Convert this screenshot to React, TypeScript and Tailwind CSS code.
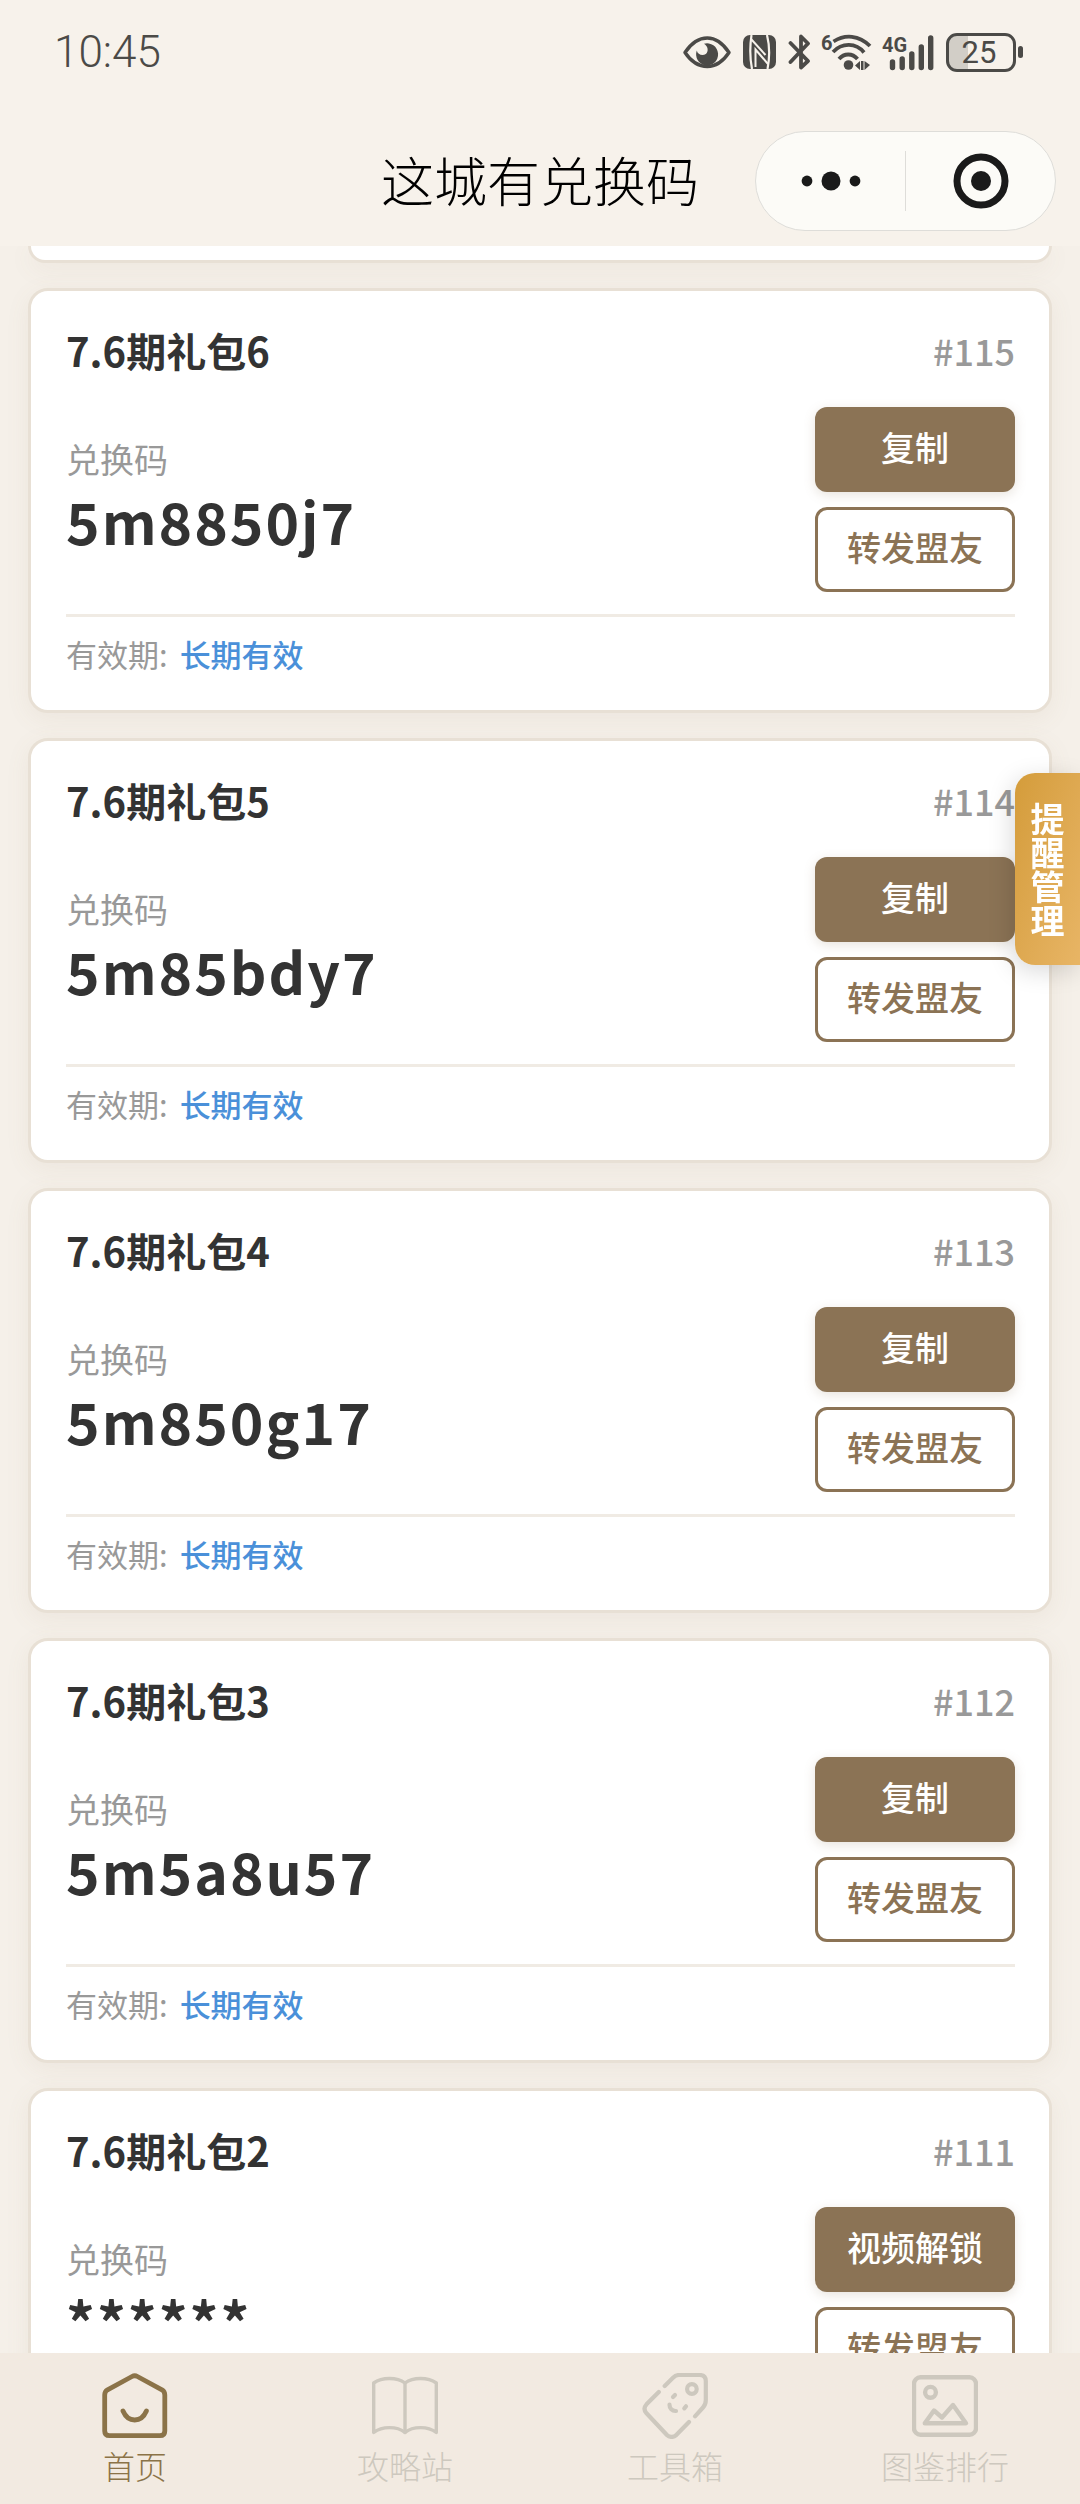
import clsx from "clsx";

type Gift = {
  id: number;
  name: string;
  code: string;
  locked?: boolean;
};

const gifts: Gift[] = [
  { id: 115, name: "7.6期礼包6", code: "5m8850j7" },
  { id: 114, name: "7.6期礼包5", code: "5m85bdy7" },
  { id: 113, name: "7.6期礼包4", code: "5m850g17" },
  { id: 112, name: "7.6期礼包3", code: "5m5a8u57" },
  { id: 111, name: "7.6期礼包2", code: "******", locked: true },
];

const StatusBar = () => {
  return <div className="flex h-[104px] items-center justify-between pl-[54px] pr-[57px] text-[#4b4a47]">
      <span className="font-['Roboto',sans-serif] text-[44px] font-light leading-none">10:45</span>

      <div className="flex items-center">
        {/* Eye comfort */}
        <svg className="mr-3 h-[34px] w-12" viewBox="0 0 48 34" fill="none">
          <path d="M2 17.5C9 7 17 3 24.3 3S39 7 46 17.5C39 28 31.5 31.5 24.3 31.5S9 28 2 17.5Z" stroke="currentColor" strokeWidth="3.400" strokeLinejoin="round" />
          <path d="M21 8.800A11 11 0 1 1 13.800 15.500C14.500 19.500 19.500 21.500 22.800 19C26 16.500 25 11 21 8.800Z" fill="currentColor" />
        </svg>

        {/* NFC */}
        <svg className="mr-3 h-[34px] w-[33px]" viewBox="0 0 33 34" fill="none">
          <rect width="33" height="34" rx="7" fill="currentColor" />
          <path d="M8.500 0C7 10 7 24 9 34M24 0C26.500 10 26.500 24 24.500 34" stroke="#f7f2eb" strokeWidth="2.200" />
          <path d="M8 4L22.500 20M12.500 32V14.500L25 29" stroke="#f7f2eb" strokeWidth="2" />
        </svg>

        {/* Bluetooth */}
        <svg className="mr-2.5 h-9 w-[23px]" viewBox="0 0 23 36" fill="none" stroke="currentColor" strokeWidth="3.800" strokeLinecap="round" strokeLinejoin="round">
          <path d="M2.500 9L20 27L13 33.500V2.500L20 9.500L2.500 28" />
        </svg>

        {/* Wi-Fi 6 */}
        <svg className="mr-2.5 h-[38px] w-[51px] overflow-visible" viewBox="0 0 51 38" fill="none">
          <text x="0" y="17" fill="currentColor" className="font-['Roboto',sans-serif] text-[20px] font-bold">6</text>
          <g stroke="currentColor" strokeWidth="3.800">
            <path d="M12.500 8.500C24 1 38 2 49 13" />
            <path d="M12 19C21 9.500 35 9.500 43 19.500" />
            <path d="M18 26C23 20 31.500 20 36.500 26" />
          </g>
          <circle cx="27.500" cy="32" r="4.800" fill="currentColor" />
          <path d="M34 32.500L39 28V37ZM40 28H42.500V37H40ZM43.500 28L49 32L43.500 37Z" fill="currentColor" />
        </svg>

        {/* Mobile signal */}
        <svg className="mr-3 h-[37px] w-[52px] overflow-visible" viewBox="0 0 52 37" fill="none">
          <text x="0" y="18" fill="currentColor" className="font-['Roboto',sans-serif] text-[20px] font-bold">4G</text>
          <path d="M10.500 28V33.500M20.200 25V33.500M29.800 20V33.500M39.300 13V33.500M48.700 4V33.500" stroke="currentColor" strokeWidth="5.400" strokeLinecap="round" />
        </svg>

        {/* Battery */}
        <div className="flex h-[39px] w-[70px] items-center justify-center rounded-[11px] border-[3px] border-current bg-linear-to-r from-[#d2cec7] from-30% to-transparent to-30% pr-1">
          <span className="font-['Roboto',sans-serif] text-[31px] leading-none">25</span>
        </div>
        <div className="ml-0.5 h-3 w-[5px] rounded-sm bg-current"></div>
      </div>
    </div>;
};

const TitleBar = () => {
  return <div className="grid h-[142px] grid-cols-[1fr_auto_1fr] items-center pt-3 pr-6">
      <h1 className="col-start-2 pb-1 pl-6 text-[53px] font-light leading-none text-black">这城有兑换码</h1>

      <div className="flex h-[100px] w-[301px] items-center justify-self-end rounded-full border border-[#deddd9] bg-[#fcfbf7] text-[#1a1a1a]">
        <button type="button" aria-label="更多" className="flex flex-1 justify-center">
          <svg className="h-5 w-[60px]" viewBox="0 0 60 20" fill="currentColor">
            <circle cx="6" cy="10" r="5.400" />
            <circle cx="30" cy="10" r="9.500" />
            <circle cx="54" cy="10" r="5.400" />
          </svg>
        </button>
        <span className="h-[60px] w-px bg-[#deddd9]"></span>
        <button type="button" aria-label="关闭" className="flex flex-1 justify-center">
          <svg className="size-14" viewBox="0 0 56 56" fill="none">
            <circle cx="28" cy="28" r="24" stroke="currentColor" strokeWidth="7" />
            <circle cx="28" cy="28" r="10" fill="currentColor" />
          </svg>
        </button>
      </div>
    </div>;
};

const GiftCard = ({ gift }: { gift: Gift }) => {
  return <article className="shrink-0 rounded-[20px] border-[3px] border-[#e8e0d5] bg-white py-[35px] pr-[34px] pl-[35px] shadow-[0_6px_24px_rgba(139,115,85,0.08)]">
      <div className="mb-8 flex h-12 items-center justify-between">
        <h2 className="text-[40px] font-bold leading-none text-[#333]">{gift.name}</h2>
        <span className="text-[36px] font-medium leading-none text-[#999]">#{gift.id}</span>
      </div>

      <div className="mt-[33px] flex items-center justify-between">
        <div className="pb-3">
          <p className="text-[34px] leading-[52px] text-[#999]">兑换码</p>
          <p className="text-[57px] font-bold leading-[70px] tracking-[2px] text-[#333]">{gift.code}</p>
        </div>

        <div className="flex w-[200px] flex-col gap-[15px]">
          <button type="button" className="h-[85px] rounded-xl bg-[#8b7355] pb-1.5 text-[34px] font-medium text-white shadow-[0_3px_12px_rgba(139,115,85,0.2)]">
            {gift.locked ? "视频解锁" : "复制"}
          </button>
          <button type="button" className="h-[85px] rounded-xl border-[3px] border-[#8b7355] bg-white pb-1.5 text-[34px] font-medium text-[#8b7355]">
            转发盟友
          </button>
        </div>
      </div>

      <div className="mt-[22px] flex items-center gap-3 border-t-[3px] border-[#f0ebe4] pt-[18px] pb-0.5 text-[31px] leading-[38px]">
        <span className="text-[#999]">有效期:</span>
        <span className="font-medium text-[#4a90d9]">长期有效</span>
      </div>
    </article>;
};

const HomeIcon = () => <svg className="size-[66px]" viewBox="0 0 66 66" fill="none" stroke="currentColor" strokeWidth="4.800" strokeLinecap="round" strokeLinejoin="round">
    <path d="M2.700 22Q2.700 18.500 5.500 16.800L30 3.500Q32.700 2 35.400 3.500L60 16.800Q62.800 18.500 62.800 22V58Q62.800 62.700 58 62.700H7.500Q2.700 62.700 2.700 58Z" />
    <path d="M21 38C24 45 28 47 32.700 47S41.400 45 44.400 38" />
  </svg>;

const BookIcon = () => <svg className="size-[66px]" viewBox="0 0 66 66" fill="none" stroke="currentColor" strokeWidth="3.400" strokeLinecap="round" strokeLinejoin="round">
    <path d="M1.700 10C10 4 25 4 33 10C41 4 56 4 64.300 10V59.500C56 53 41 53 33 59.500C25 53 10 53 1.700 59.500Z" />
    <path d="M33 10V59.500" />
  </svg>;

const TagIcon = () => <svg className="size-[66px]" viewBox="0 0 66 66" fill="none" stroke="currentColor" strokeWidth="4.200" strokeLinecap="round" strokeLinejoin="round">
    <path d="M22.700 13L31 4.800Q33.800 2 37 2H57.500Q63.800 2 63.800 8V27Q63.800 31.500 61 34.500L53 43.300" />
    <path d="M16.800 19L4.500 31.300Q0.500 35.800 4.500 40.300L24.700 61.800Q29.700 66 34.500 61.800L47 49" />
    <circle cx="49.900" cy="16" r="4.800" />
    <path d="M33 22L31 24M44 33.300L42.300 35.300M27.500 31.700C27.500 35.500 30 38.200 34 38" />
  </svg>;

const PictureIcon = () => <svg className="size-[66px]" viewBox="0 0 66 66" fill="none" stroke="currentColor" strokeWidth="4.400" strokeLinecap="round" strokeLinejoin="round">
    <rect x="2" y="4.300" width="62" height="57.400" rx="6.500" />
    <circle cx="18.500" cy="19.300" r="5.400" />
    <path d="M12.800 50.300L22 37.500L30 44.500L41 32L54 50.300Z" />
  </svg>;

const tabs = [
  { label: "首页", icon: HomeIcon, active: true },
  { label: "攻略站", icon: BookIcon },
  { label: "工具箱", icon: TagIcon },
  { label: "图鉴排行", icon: PictureIcon },
];

export default function App() {
  return <div className="flex h-screen flex-col overflow-hidden bg-[#f5f0e9] font-['Noto_Sans_CJK_SC',sans-serif]">
      <header className="shrink-0 bg-[#f7f2eb]">
        <StatusBar />
        <TitleBar />
      </header>

      <main className="flex min-h-0 flex-1 flex-col gap-[25px] overflow-hidden px-7">
        {/* Tail of the card scrolled under the header */}
        <div className="h-[17px] shrink-0 rounded-b-[20px] border-[3px] border-t-0 border-[#e8e0d5] bg-white shadow-[0_6px_24px_rgba(139,115,85,0.08)]"></div>
        {gifts.map((gift) => <GiftCard key={gift.id} gift={gift} />)}
      </main>

      <nav className="grid shrink-0 grid-cols-4 bg-[#f2eae1] pt-5 pb-[17px]">
        {tabs.map(({ label, icon: Icon, active }) => <a key={label} href="#" className={clsx("flex flex-col items-center gap-1", active ? "text-[#8b7348]" : "text-[#cdc8be]")}>
            <Icon />
            <span className="text-[32px] font-light leading-[44px]">{label}</span>
          </a>)}
      </nav>

      {/* Floating reminder tab */}
      <button type="button" className="fixed top-[773px] right-0 flex w-[65px] justify-center rounded-l-[20px] bg-linear-to-br from-[#d49c3a] to-[#e8b565] py-7 text-[34px] font-bold leading-[34px] text-white shadow-[-3px_6px_24px_rgba(0,0,0,0.15)]">
        <span className="w-[34px] break-all">提醒管理</span>
      </button>
    </div>;
}
